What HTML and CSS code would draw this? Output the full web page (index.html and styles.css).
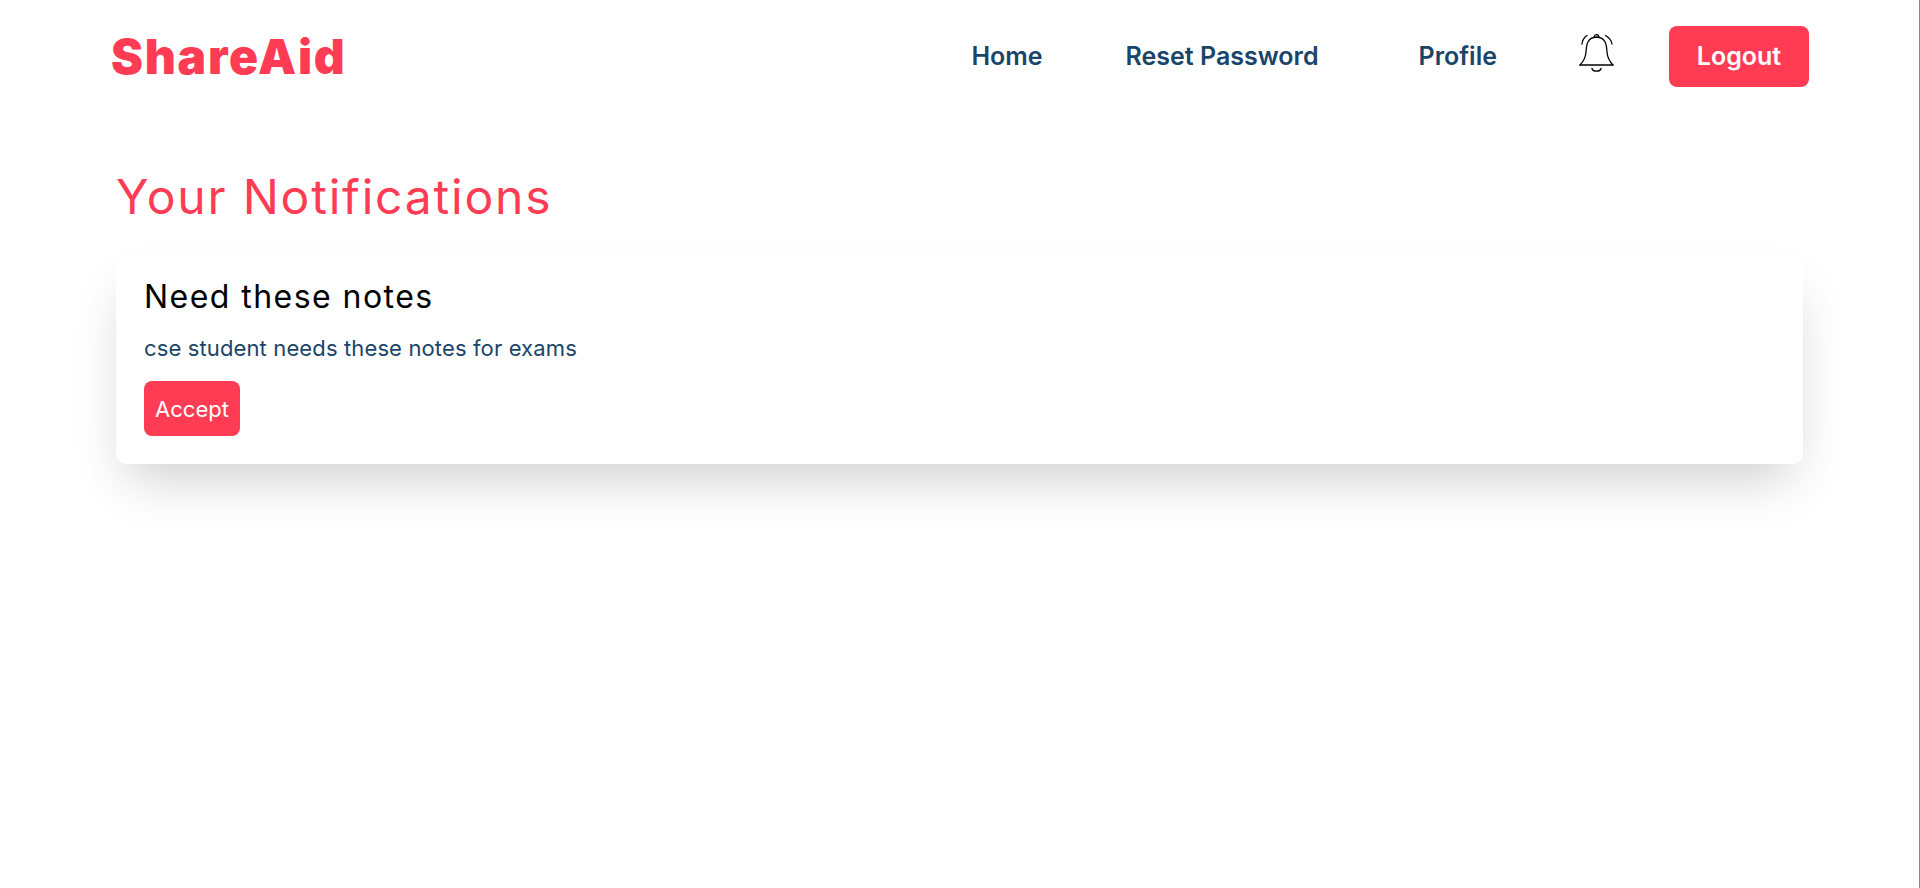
FILE: index.html
```html
<!DOCTYPE html>
<html>
<head>
    <meta charset="UTF-8">
    <title>ShareAid</title>
    <link rel="stylesheet" href="styles.css">
</head>
<body>
<div class="page">
    <nav class="nav">
        <a class="logo" href="#">ShareAid</a>
        <ul class="links">
            <li class="item home"><a href="#">Home</a></li>
            <li class="item reset"><a href="#">Reset Password</a></li>
            <li class="item profile"><a href="#">Profile</a></li>
            <li class="bell">
                <svg width="36" height="40" viewBox="0 0 36 40" fill="none" stroke="#000" stroke-width="1.3" stroke-linecap="round">
                    <path d="M2 32h33"/>
                    <path d="M2 32c4-4 5.500-7 6-13 .5-7 1-14.500 10.500-15 9.500.5 10 8 10.500 15 .5 6 2 9 6 13"/>
                    <path d="M16.200 4a2.300 2.300 0 1 1 4.600 0"/>
                    <path d="M14 35.500c1 3.600 8 3.600 9 0"/>
                    <path d="M4 11c.3-3.500 2-6.500 5-8.500"/>
                    <path d="M34 11c-.6-3.500-3-6.500-6.500-8.500"/>
                </svg>
            </li>
            <li><a class="logout" href="#">Logout</a></li>
        </ul>
    </nav>
    <main class="content">
        <h1 class="title">Your Notifications</h1>
        <div class="card">
            <h2>Need these notes</h2>
            <p>cse student needs these notes for exams</p>
            <button class="accept">Accept</button>
        </div>
    </main>
</div>
</body>
</html>
```

FILE: styles.css
```css
*{box-sizing:border-box;}
html,body{height:100%;}
body{margin:0;background:#fff;font-family:"Inter","Noto Sans",sans-serif;}
.page{height:100%;border-right:1px solid #1ea7e0;overflow:hidden;}
a{text-decoration:none;color:inherit;}

.nav{display:flex;justify-content:space-between;align-items:center;height:113px;padding:0 110px 0 111px;}
.logo{font-weight:900;font-size:48px;letter-spacing:1.7px;color:#ff3c54;}
.links{display:flex;align-items:center;list-style:none;margin:0;padding:0;}
.links li{font-size:25px;font-weight:600;color:#1a4568;}
.item{padding-bottom:2px;}
.home{margin-right:83px;}
.reset{margin-right:100px;}
.profile{margin-right:81px;}
.bell{display:flex;margin:0 55px 7px 0;}
.logout{display:block;width:140px;height:61px;line-height:61px;text-align:center;border-radius:8px;background:#ff3c54;color:#fff;}

.content{padding:52px 116px 0;}
.title{margin:0 0 28px;font-weight:400;font-size:48px;line-height:64px;letter-spacing:1.8px;color:#ff3c54;}
.card{padding:18px 28px 28px;border-radius:10px;background:#fff;box-shadow:0 25px 50px -12px rgba(0,0,0,.2);}
.card h2{margin:0 0 13px;font-weight:400;font-size:32px;line-height:44px;letter-spacing:1.45px;color:#000;}
.card p{margin:0 0 17px;font-size:22px;line-height:32px;letter-spacing:.13px;color:#1a4568;}
.accept{display:block;width:96px;height:55px;padding:0;border:0;border-radius:8px;background:#ff3c54;color:#fff;font-family:inherit;font-size:22px;}
```
